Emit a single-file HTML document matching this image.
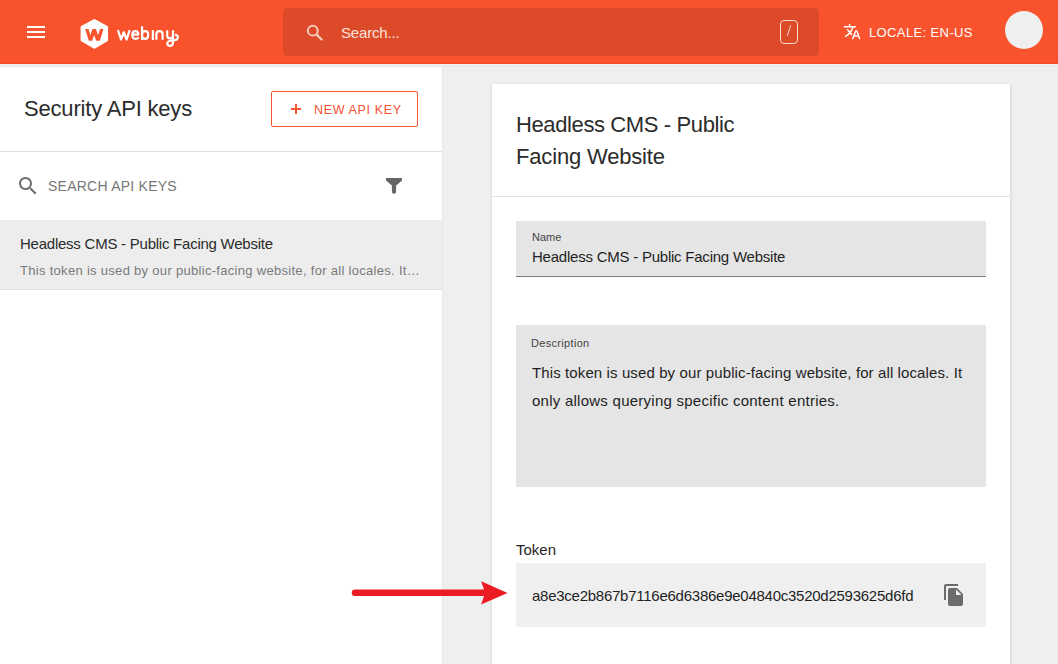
<!DOCTYPE html>
<html>
<head>
<meta charset="utf-8">
<style>
*{box-sizing:border-box;margin:0;padding:0}
html,body{width:1058px;height:664px;overflow:hidden;background:#efefef;font-family:"Liberation Sans",sans-serif;color:#1f1f1f}
.abs{position:absolute}
.txt{position:absolute;white-space:nowrap;line-height:1}
#hdr{position:absolute;left:0;top:0;width:1058px;height:64px;background:#f9532d}
#search{position:absolute;left:283px;top:8px;width:536px;height:48px;border-radius:4px;background:#dd4a29}
#left{position:absolute;left:0;top:64px;width:442px;height:600px;background:#fff}
#card{position:absolute;left:492px;top:84px;width:518px;height:600px;background:#fff;box-shadow:1px 1px 3px rgba(0,0,0,.11),-1px 0 2px rgba(0,0,0,.05)}
.hr{position:absolute;height:1px;background:#e0e0e0}
</style>
</head>
<body>
<div id="hdr">
  <!-- hamburger -->
  <div class="abs" style="left:27px;top:26px;width:18px;height:2px;background:#fff"></div>
  <div class="abs" style="left:27px;top:31px;width:18px;height:2px;background:#fff"></div>
  <div class="abs" style="left:27px;top:36px;width:18px;height:2px;background:#fff"></div>
  <!-- logo -->
  <svg class="abs" style="left:78px;top:16px" width="110" height="34" viewBox="78 16 110 34">
    <path d="M94.35 20.3 L106.8 27.1 L106.8 40.1 L94.35 47.5 L81.9 40.1 L81.9 27.1 Z" fill="#fff" stroke="#fff" stroke-width="2.6" stroke-linejoin="round"/>
    <path d="M85.2 28.9 L88.5 28.9 L90.45 35.35 L92.4 28.9 L95.9 28.9 L98 35.35 L100.1 28.9 L103.5 28.9 L99.8 40.8 L96.2 40.8 L94.15 34.9 L92.1 40.8 L88.8 40.8 Z" fill="#f9532d"/>
    <g fill="none" stroke="#fff" stroke-width="2.2" stroke-linecap="butt" stroke-linejoin="round">
      <path d="M117.9 30.1 L121 39.5 L123.8 32.2 L126.6 39.5 L129.7 30.1"/>
      <path d="M132.4 34.6 L138.4 34.6 C138.4 32.3 137.2 31.1 135.4 31.1 C133.4 31.1 132.3 32.8 132.3 35.1 C132.3 37.5 133.6 38.9 135.6 38.9 C137 38.9 138 38.4 138.8 37.7"/>
      <path d="M142.05 26.2 L142.05 40 M142.05 35.05 C142.05 32.6 143.4 31.1 145.3 31.1 C147.2 31.1 148.2 32.8 148.2 35.05 C148.2 37.4 147.1 38.9 145.2 38.9 C143.4 38.9 142.05 37.5 142.05 35.05"/>
      <path d="M152.85 30.1 L152.85 40"/>
      <path d="M156.4 39.8 L156.4 34.2 C156.4 32.2 157.6 31.1 159.5 31.1 C161.4 31.1 162.6 32.2 162.6 34.2 L162.6 39.8"/>
      <path d="M167.2 30.3 L167.2 35.2 C167.2 37.4 168.2 38.4 170.1 38.4 C172 38.4 173 37.4 173 35.2 L173 30.3 M173 35.2 L173 42.6 C173 44.8 171.8 45.9 170.1 45.9 C168.4 45.9 167.3 45 167.3 43.6 C167.3 41.6 169.6 40.6 172.6 40.5 C175.8 40.4 177.9 39.2 177.9 37.2 C177.9 35.6 176.6 34.7 175 34.8"/>
    </g>
  </svg>
  <div id="search">
    <svg class="abs" style="left:21px;top:14px" width="20" height="20" viewBox="0 0 20 20">
      <circle cx="8.8" cy="8.7" r="4.9" fill="none" stroke="#f6cabe" stroke-width="2"/>
      <path d="M12.9 12.9 L17.6 17.5" stroke="#f6cabe" stroke-width="2.3" stroke-linecap="round"/>
    </svg>
    <div class="txt" style="left:58px;top:17px;font-size:15px;letter-spacing:-0.17px;color:#fbe2da">Search...</div>
    <div class="abs" style="left:497px;top:12px;width:18px;height:24px;border:1.3px solid #fbd9cf;border-radius:4px"></div>
    <svg class="abs" style="left:497px;top:12px" width="18" height="24"><path d="M10.7 5.3 L7.3 15.8" stroke="#fbd9cf" stroke-width="1"/></svg>
  </div>
  <!-- translate icon -->
  <svg class="abs" style="left:840px;top:20px" width="25" height="24" viewBox="840 20 25 24">
    <g fill="none" stroke="#fff" stroke-width="1.5" stroke-linecap="round" stroke-linejoin="round">
      <path d="M844.3 26.7 L855.5 26.7 M849.6 24.6 L849.6 26.7 M852.8 27.4 C851.6 31 849.2 34.2 845.6 36.3 M847.5 29.7 L851.6 34.5"/>
      <path d="M852.7 38.6 L855.7 30.9 L856.8 30.9 L859.6 38.6 M853.7 36 L858.7 36"/>
    </g>
  </svg>
  <div class="txt" style="left:869px;top:26px;font-size:13px;letter-spacing:0.38px;color:#fff">LOCALE: EN-US</div>
  <div class="abs" style="left:1005px;top:11px;width:38px;height:38px;border-radius:50%;background:#efefef"></div>
</div>

<div id="left">
  <div class="txt" style="left:24px;top:34px;font-size:22px;letter-spacing:-0.19px;color:#2b2b2b">Security API keys</div>
  <div class="abs" style="left:271px;top:27px;width:147px;height:36px;border:1px solid #f4532f;border-radius:2px"></div>
  <div class="abs" style="left:290.6px;top:44.1px;width:10.6px;height:1.8px;background:#f4532f"></div>
  <div class="abs" style="left:295px;top:39.8px;width:1.8px;height:10.4px;background:#f4532f"></div>
  <div class="txt" style="left:314px;top:40px;font-size:12.5px;letter-spacing:0.65px;color:#f4532f">NEW API KEY</div>
  <div class="hr" style="left:0;top:87px;width:442px"></div>
  <!-- search row -->
  <svg class="abs" style="left:16px;top:110px" width="24" height="24" viewBox="0 0 24 24">
    <path fill="#6f6f6f" d="M15.5 14h-.79l-.28-.27C15.41 12.59 16 11.11 16 9.5 16 5.91 13.09 3 9.5 3S3 5.91 3 9.5 5.91 16 9.5 16c1.61 0 3.09-.59 4.23-1.57l.27.28v.79l5 4.99L20.49 19l-4.99-5zm-6 0C7.01 14 5 11.99 5 9.5S7.01 5 9.5 5 14 7.01 14 9.5 11.99 14 9.5 14z"/>
  </svg>
  <div class="txt" style="left:48px;top:115px;font-size:14px;letter-spacing:0.24px;color:#777">SEARCH API KEYS</div>
  <svg class="abs" style="left:384px;top:112px" width="20" height="20" viewBox="0 0 20 20">
    <path fill="#666" d="M2 2 H18 V4.4 L12.1 9.6 V15.8 C12.1 17 11.2 17.8 10 17.8 C8.8 17.8 7.9 17 7.9 15.8 V9.6 L2 4.4 Z"/>
  </svg>
  <div class="abs" style="left:0;top:156px;width:442px;height:69px;background:#ededed"></div>
  <div class="hr" style="left:0;top:225px;width:442px;background:#e2e2e2"></div>
  <div class="txt" style="left:20px;top:172px;font-size:15px;letter-spacing:-0.24px;color:#2b2b2b">Headless CMS - Public Facing Website</div>
  <div class="txt" style="left:20px;top:200px;font-size:13px;letter-spacing:0.3px;color:#7a7a7a">This token is used by our public-facing website, for all locales. It…</div>
</div>
<div class="abs" style="left:442px;top:64px;width:1px;height:600px;background:#e8e8e8"></div>
<div class="abs" style="left:0;top:63px;width:1058px;height:1px;background:#f74c22"></div>
<div class="abs" style="left:0;top:64px;width:1058px;height:1px;background:#edf4f5"></div>
<div class="abs" style="left:0;top:65px;width:1058px;height:2px;background:#ececec"></div>

<div id="card">
  <div class="txt" style="left:24px;top:25px;font-size:22px;line-height:32px;letter-spacing:-0.385px;color:#2b2b2b">Headless CMS - Public</div>
  <div class="txt" style="left:24px;top:57px;font-size:22px;line-height:32px;letter-spacing:-0.17px;color:#2b2b2b">Facing Website</div>
  <div class="hr" style="left:0;top:112px;width:518px;background:#e2e2e2"></div>
  <!-- name -->
  <div class="abs" style="left:24px;top:137px;width:470px;height:56px;background:#e5e5e5;border-bottom:1px solid #7b7b7b"></div>
  <div class="txt" style="left:40px;top:148px;font-size:11px;color:#444">Name</div>
  <div class="txt" style="left:40px;top:165px;font-size:15px;letter-spacing:-0.23px;color:#1f1f1f">Headless CMS - Public Facing Website</div>
  <!-- description -->
  <div class="abs" style="left:24px;top:241px;width:470px;height:162px;background:#e5e5e5"></div>
  <div class="txt" style="left:39px;top:254px;font-size:11px;letter-spacing:0.32px;color:#444">Description</div>
  <div class="txt" style="left:40px;top:281px;font-size:15px;letter-spacing:0.11px;color:#1f1f1f">This token is used by our public-facing website, for all locales. It</div>
  <div class="txt" style="left:40px;top:309px;font-size:15px;letter-spacing:0.25px;color:#1f1f1f">only allows querying specific content entries.</div>
  <!-- token -->
  <div class="txt" style="left:24px;top:458px;font-size:15px;color:#1f1f1f">Token</div>
  <div class="abs" style="left:24px;top:479px;width:470px;height:64px;background:#efefef"></div>
  <div class="txt" style="left:40px;top:504px;font-size:15px;letter-spacing:-0.255px;color:#1f1f1f">a8e3ce2b867b7116e6d6386e9e04840c3520d2593625d6fd</div>
  <svg class="abs" style="left:450px;top:499px" width="24" height="24" viewBox="0 0 24 24">
    <path fill="#6b6b6b" d="M16 1H4c-1.1 0-2 .9-2 2v14h2V3h12V1zm-1 4l6 6v10c0 1.1-.9 2-2 2H7.99C6.89 23 6 22.1 6 21l.01-14c0-1.1.89-2 1.99-2h7zm-1 7h5.5L14 6.5V12z"/>
  </svg>
</div>

<!-- red arrow -->
<svg class="abs" style="left:340px;top:570px" width="180" height="45" viewBox="340 570 180 45">
  <path d="M355 592.8 L486 592.8" stroke="#ec1c24" stroke-width="6.5" stroke-linecap="round"/>
  <path d="M481.1 581.2 L507.6 593 L481.1 604.6 L485.2 593 Z" fill="#ec1c24"/>
</svg>
</body>
</html>
